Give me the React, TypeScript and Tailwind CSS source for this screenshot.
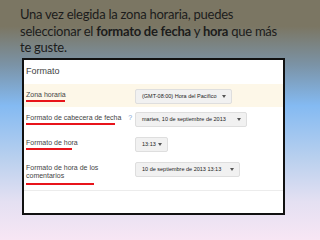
import React from "react";

type Row = {
  label: string[];
  line: string;
  value: string;
  selectW: string;
  rowH: string;
  bg?: string;
  help?: boolean;
  lineGap?: string;
};

const rows: Row[] = [
  { label: ["Zona horaria"], line: "w-[39px]", value: "(GMT-08:00) Hora del Pacífico", selectW: "w-[97px]", rowH: "h-[23px]", bg: "bg-[#fdf7e8]" },
  { label: ["Formato de cabecera de fecha"], line: "w-[89px]", value: "martes, 10 de septiembre de 2013", selectW: "w-[112px]", rowH: "h-[25px]", help: true },
  { label: ["Formato de hora"], line: "w-[46px]", value: "13:13", selectW: "w-[33px]", rowH: "h-[25px]" },
  { label: ["Formato de hora de los", "comentarios"], line: "w-[68px]", value: "10 de septiembre de 2013 13:13", selectW: "w-[105px]", rowH: "h-[28px]", lineGap: "mt-[3px]" },
];

function Select({ value, width }: { value: string; width: string }) {
  return (
    <div
      className={`${width} h-[15px] flex items-center justify-between pl-[6px] pr-[5px] bg-[#f1f1f1] border border-[#dedede] rounded-[2px] text-[5.5px] text-[#222] whitespace-nowrap`}
    >
      <span>{value}</span>
      <span className="w-0 h-0 border-l-[2.5px] border-r-[2.5px] border-t-[3px] border-l-transparent border-r-transparent border-t-[#555]" />
    </div>
  );
}

export default function App() {
  return (
    <div
      className="w-[320px] h-[240px] overflow-hidden pt-[6px] bg-[linear-gradient(to_bottom,#7b7663_0%,#7b7663_11%,#7b93a6_27%,#84baf2_44%,#b9d0ee_66%,#e4e0f2_84%,#f7e6f4_100%)]"
      style={{ fontFamily: "Lato, 'Open Sans', sans-serif" }}
    >
      <p className="pl-[20px] pr-[6px] text-[13px] tracking-[-0.25px] leading-[16.5px] text-[#1c1c1c]">
        Una vez elegida la zona horaria, puedes
        <br />
        seleccionar el <b>formato de fecha</b> y <b>hora</b> que más
        <br />
        te guste.
      </p>

      <div
        className="mt-[2px] ml-[22px] w-[263px] h-[157px] border-2 border-[#111] bg-white"
        style={{ fontFamily: "'Liberation Sans', Arial, sans-serif" }}
      >
        <div className="h-[24px] flex items-center pl-[2px] text-[9px] text-[#444]">
          Formato
        </div>

        {rows.map((r, i) => (
          <div key={i} className={`${r.rowH} ${r.bg ?? ""} flex items-start`}>
            <div className="w-[111px] flex items-start pl-[2px] pt-[7px]">
              <div>
                {r.label.map((t) => (
                  <div key={t} className="text-[7px] leading-[8px] text-[#444] whitespace-nowrap">
                    {t}
                  </div>
                ))}
                <div className={`${r.line} h-[2px] bg-[#e8141b] ${r.lineGap ?? "mt-[1px]"}`} />
              </div>
              {r.help && (
                <span className="ml-[7px] text-[7px] leading-[8px] text-[#7ea3d2]">?</span>
              )}
            </div>
            <div className="mt-[5px]">
              <Select value={r.value} width={r.selectW} />
            </div>
          </div>
        ))}

        <div className="mt-[5px] border-t border-[#ececec]" />
      </div>
    </div>
  );
}
